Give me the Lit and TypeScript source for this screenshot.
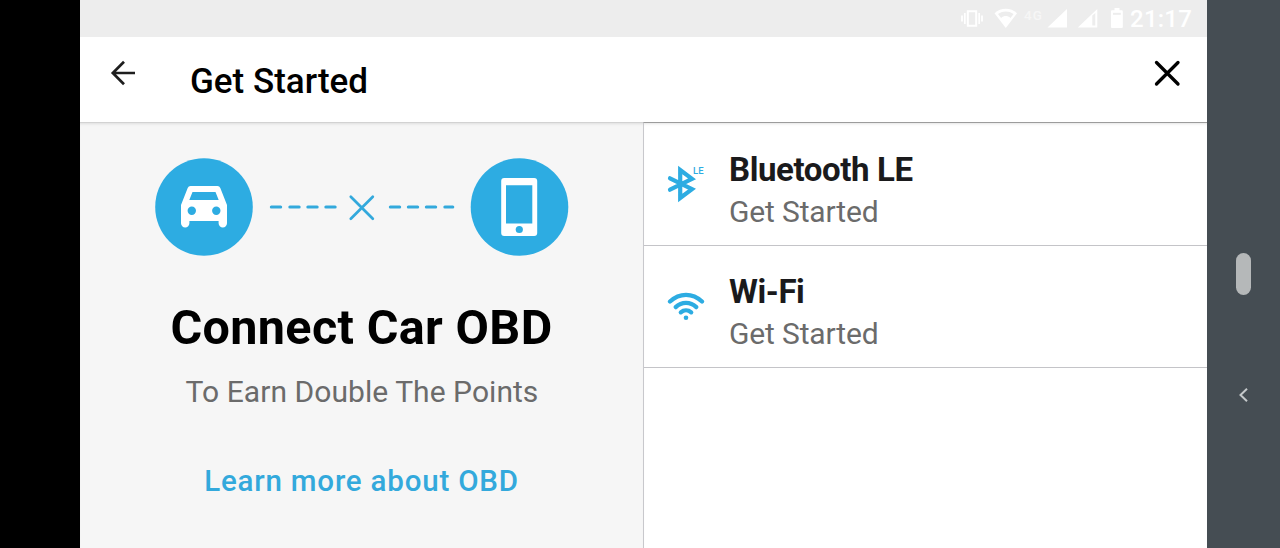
import { LitElement, html, css, svg } from "lit";
import { customElement, property } from "lit/decorators.js";

const bluetoothIcon = html`
  <svg width="40" height="40" viewBox="0 0 40 40">
    <path d="M3 13.300 25 24.200 13.200 33V5L25 13.800 3 24.700" fill="none" stroke="#2dace2" stroke-width="4.200" stroke-linecap="round" stroke-linejoin="miter" stroke-miterlimit="3"/>
    <text x="26" y="9.200" font-family="Roboto, sans-serif" font-size="9.500" font-weight="500" letter-spacing="0.2" fill="#2dace2">LE</text>
  </svg>
`;

const wifiIcon = html`
  <svg width="40" height="40" viewBox="0 0 40 40">
    <g fill="none" stroke="#2dace2" stroke-width="4.300" stroke-linecap="round">
      <path d="M3 13.500C12.500 4.600 25.500 4.600 35 13.500"/>
      <path d="M8.700 19.100C14.600 13.500 23.400 13.500 29.300 19.100"/>
      <path d="M13.800 24.300C16.800 21.800 21.200 21.800 24.200 24.300"/>
    </g>
    <circle cx="19" cy="29.800" r="2.300" fill="#2dace2"/>
  </svg>
`;

@customElement("status-bar")
export class StatusBar extends LitElement {
  static styles = css`
    :host {
      display: flex;
      justify-content: flex-end;
      height: 37px;
      padding-right: 15px;
      box-sizing: border-box;
      background: #ededed;
      font-family: Roboto, sans-serif;
      color: #fff;
    }

    svg {
      display: block;
      flex: none;
    }

    .time {
      font-size: 24px;
      font-weight: 500;
      line-height: 38px;
      letter-spacing: 0.2px;
      margin-left: 6px;
    }
  `;

  render() {
    return html`
      <svg width="164" height="37" viewBox="960 0 164 37" fill="#fff">
        <g fill="none" stroke="#fff" stroke-width="1.700">
          <path d="M967.800 11.300h8.400v14.400h-8.400z" stroke-width="2"/>
          <path d="M964.800 13v11M979.200 13v11M962 15.500v6M982 15.500v6"/>
        </g>
        <path d="M994.500 13.200C1001 7.400 1010.500 7.400 1017 13.200L1005.800 28Z"/>
        <path d="M998 13.900C1003 10.600 1008.600 10.600 1013.600 13.900L1010.500 18C1007.500 15.400 1004.100 15.400 1001.100 18Z" fill="#ededed"/>
        <text x="1024" y="19.500" font-family="Roboto, sans-serif" font-size="13.500" font-weight="500" letter-spacing="1" fill="#f6f6f6">4G</text>
        <path d="M1067 9v18.500h-19.500z"/>
        <path d="M1097.300 9v18.500h-19.500zM1092.300 15.500v10h3v-12.500z" fill-rule="evenodd"/>
        <path d="M1114.500 8h5v2.300h2.300q1 0 1 1v15.700q0 1-1 1h-9.800q-1 0-1-1V11.300q0-1 1-1h2.500z"/>
        <path d="M1113 12.800h7.800v2H1113z" fill="#ededed"/>
      </svg>
      <span class="time">21:17</span>
    `;
  }
}

@customElement("option-row")
export class OptionRow extends LitElement {
  @property() label = "";
  @property() hint = "";
  @property({ attribute: false }) icon: unknown;

  static styles = css`
    :host {
      display: flex;
      gap: 22px;
      padding-left: 23px;
      border-bottom: 1px solid #c4c4c8;
      font-family: Roboto, sans-serif;
      cursor: pointer;
    }

    .icon {
      width: 40px;
      padding-top: 42px;
    }

    .text {
      display: flex;
      flex-direction: column;
      gap: 4px;
      padding-top: var(--row-top, 26px);
      white-space: nowrap;
    }

    .label {
      font-size: 33px;
      font-weight: 700;
      line-height: 40px;
      letter-spacing: -0.4px;
      color: #1a1a1c;
    }

    .hint {
      font-size: 30px;
      line-height: 36px;
      letter-spacing: -0.15px;
      color: #6b6b6b;
    }
  `;

  render() {
    return html`
      <div class="icon">${this.icon}</div>
      <div class="text">
        <span class="label">${this.label}</span>
        <span class="hint">${this.hint}</span>
      </div>
    `;
  }
}

@customElement("app-root")
export class AppRoot extends LitElement {
  static styles = css`
    :host {
      display: grid;
      grid-template-columns: 80px 1127px 73px;
      height: 548px;
      overflow: hidden;
      background: #000;
      font-family: Roboto, sans-serif;
    }

    svg {
      display: block;
    }

    .screen {
      display: flex;
      flex-direction: column;
      background: #fff;
    }

    .header {
      display: flex;
      align-items: flex-start;
      height: 85px;
      padding: 22px 26px 0 29px;
      box-sizing: border-box;
    }

    .title {
      flex: 1;
      margin: 3px 0 0 51px;
      font-size: 35px;
      font-weight: 500;
      line-height: 40px;
      color: #000;
    }

    .panels {
      flex: 1;
      display: grid;
      grid-template-columns: 563px 564px;
    }

    .intro {
      display: flex;
      flex-direction: column;
      align-items: center;
      padding-top: 35px;
      border-top: 1px solid #d2d2d2;
      background: #f6f6f6;
      box-shadow: inset 0 3px 3px -2px #dedede;
      white-space: nowrap;
    }

    .heading {
      margin: 44px 0 0;
      font-size: 48.500px;
      font-weight: 700;
      line-height: 56px;
      letter-spacing: 0.35px;
      color: #000;
    }

    .subtitle {
      margin: 18px 0 0;
      padding-left: 1px;
      font-size: 30px;
      line-height: 36px;
      letter-spacing: 0.05px;
      color: #6b6b6b;
    }

    .learn {
      margin-top: 53px;
      font-size: 29.500px;
      font-weight: 500;
      line-height: 36px;
      letter-spacing: 0.8px;
      color: #33a9dc;
      text-decoration: none;
    }

    .options {
      border-top: 1px solid #9c9c9c;
      border-left: 1px solid #c8c8cc;
      box-shadow: inset 0 3px 3px -2px #e4e4e4;
    }

    .first {
      --row-top: 27px;
      height: 122px;
    }

    .second {
      height: 121px;
    }

    .nav {
      display: flex;
      flex-direction: column;
      align-items: center;
      padding-top: 253px;
      background: #454d53;
    }

    .home {
      width: 15px;
      height: 42px;
      border-radius: 8px;
      background: #b5b8b9;
    }

    .back {
      margin-top: 92px;
    }
  `;

  renderConnection() {
    const dashes = [270, 288.500, 306.500, 324.500, 389, 407, 425, 443.500];
    return html`
      <svg width="414" height="98" viewBox="155 158 414 98">
        <circle cx="204" cy="207" r="48.800" fill="#2dace2"/>
        <circle cx="519.500" cy="207" r="48.800" fill="#2dace2"/>
        <path fill="#fff" fill-rule="evenodd" d="M190.500 186h27q2 0 2.800 2l6.700 17v18.200a4.200 4.200 0 0 1-8.400 0V221h-29.200v2.200a4.200 4.200 0 0 1-8.400 0V205l6.700-17q.8-2 2.800-2zM192.500 192l-3.200 8h29.400l-3.200-8zM191.800 206.500a4.200 4.200 0 1 0 0 8.400 4.200 4.200 0 0 0 0-8.400zM216.300 206.500a4.200 4.200 0 1 0 0 8.400 4.200 4.200 0 0 0 0-8.400z"/>
        ${dashes.map((x) => svg`<path d="M${x + 1.3} 207h${x > 440 ? 8 : 9.4}" stroke="#33a9dc" stroke-width="3" stroke-linecap="round"/>`)}
        <path d="M350.800 196.800l22 22m0-22l-22 22" stroke="#33a9dc" stroke-width="2.700" stroke-linecap="round"/>
        <rect x="501.200" y="178" width="36" height="58" rx="3" fill="#fff"/>
        <path d="M506 185.300h26.300v38.200H506z" fill="#2dace2"/>
        <circle cx="519.300" cy="229.500" r="3.600" fill="#2dace2"/>
      </svg>
    `;
  }

  render() {
    return html`
      <div></div>
      <div class="screen">
        <status-bar></status-bar>
        <div class="header">
          <svg width="30" height="28" viewBox="109 59 30 28" fill="none" stroke="#1e1e1e" stroke-width="2.700">
            <path d="M135 73H112.500M124 61.800L112.800 73l11.200 11.200"/>
          </svg>
          <h1 class="title">Get Started</h1>
          <svg width="28" height="28" viewBox="1153 59 28 28" fill="none" stroke="#000" stroke-width="3.300" stroke-linecap="round">
            <path d="M1156.500 62.500l21.500 21.500m0-21.500L1156.500 84"/>
          </svg>
        </div>
        <div class="panels">
          <div class="intro">
            ${this.renderConnection()}
            <h2 class="heading">Connect Car OBD</h2>
            <p class="subtitle">To Earn Double The Points</p>
            <a class="learn">Learn more about OBD</a>
          </div>
          <div class="options">
            <option-row class="first" label="Bluetooth LE" hint="Get Started" .icon=${bluetoothIcon}></option-row>
            <option-row class="second" label="Wi-Fi" hint="Get Started" .icon=${wifiIcon}></option-row>
          </div>
        </div>
      </div>
      <div class="nav">
        <div class="home"></div>
        <svg class="back" width="12" height="16" viewBox="0 0 12 16" fill="none" stroke="#c4c8ca" stroke-width="2">
          <path d="M9 1.800L2.500 8l6.500 6.200"/>
        </svg>
      </div>
    `;
  }
}
